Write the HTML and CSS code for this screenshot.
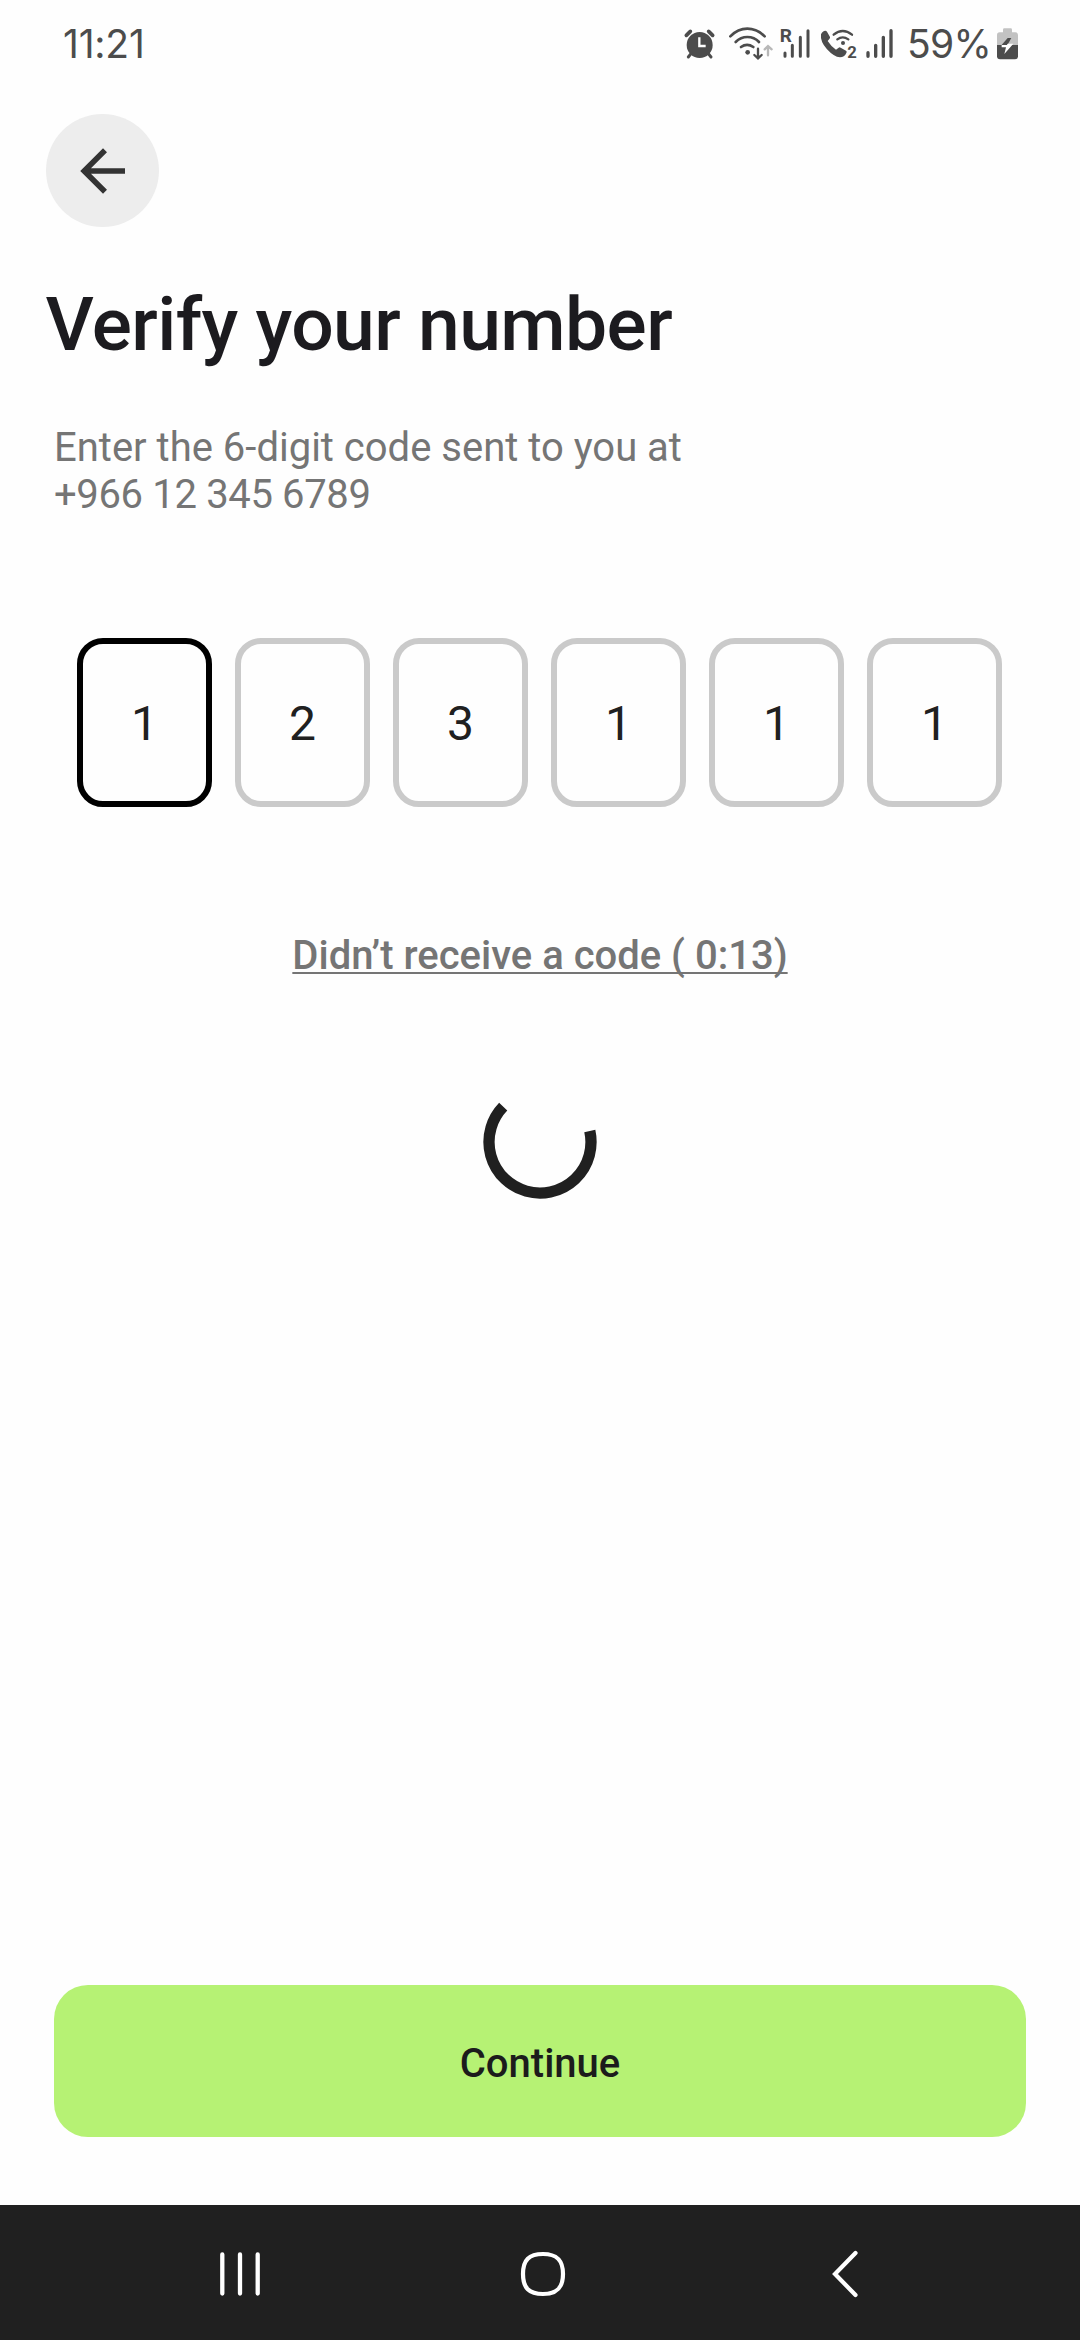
FILE: index.html
```html
<!DOCTYPE html>
<html lang="en">
<head>
<meta charset="utf-8">
<title>Verify your number</title>
<link rel="stylesheet" href="styles.css">
</head>
<body>
<div class="screen">
  <header class="status-bar">
    <span class="clock">11:21</span>
    <div class="indicators">
      <svg class="alarm" viewBox="42 36 93 99" width="31" height="33">
        <circle cx="89" cy="90" r="39" fill="#4c4c4c"/>
        <path d="M49 61L61 49M128 61L116 49" stroke="#4c4c4c" stroke-width="11" stroke-linecap="round"/>
        <path d="M63 116L55 126M115 116L123 126" stroke="#4c4c4c" stroke-width="9" stroke-linecap="round"/>
        <path d="M88 67V93H107" fill="none" stroke="#fff" stroke-width="7"/>
      </svg>
      <svg class="wifi" viewBox="174 36 138 99" width="46" height="33">
        <g fill="none" stroke="#4c4c4c" stroke-width="8" stroke-linecap="round">
          <path d="M181 64Q204 41 232 41Q261 41 284 64"/>
          <path d="M197 81Q212 66 232 66Q253 66 267 81"/>
          <path d="M213 96Q231 83 250 96"/>
          <path d="M264 101V128M253 120L264 130L275 120" stroke-width="7"/>
          <path d="M294 121V95M284 103L294 93L305 103" stroke="#b8b8b8" stroke-width="7"/>
        </g>
        <circle cx="233" cy="112" r="7" fill="#4c4c4c"/>
      </svg>
      <svg class="signal-roaming" viewBox="327 36 96 99" width="32" height="33">
        <text class="icon-text" x="329" y="81" font-size="57">R</text>
        <path d="M345 114V124M367 91V124M391 67V124M414 47V124" stroke="#4c4c4c" stroke-width="9" stroke-linecap="round"/>
      </svg>
      <svg class="wifi-call" viewBox="450 36 114 99" width="38" height="33">
        <path d="M453 58Q458 47 466 47Q469 47 471 50L480 66Q481 69 478 72L473 78Q483 94 498 104L506 98Q509 96 512 98L528 107Q532 110 529 114Q523 127 510 127Q492 126 471 103Q450 80 453 58Z" fill="#4c4c4c"/>
        <g fill="none" stroke="#4c4c4c" stroke-width="7" stroke-linecap="round">
          <path d="M491 59Q518 37 546 59"/>
          <path d="M502 73Q518 61 535 73"/>
        </g>
        <circle cx="519" cy="84" r="6" fill="#4c4c4c"/>
        <text class="icon-text" x="532" y="128" font-size="50">2</text>
      </svg>
      <svg class="signal" viewBox="45 36 87 99" width="29" height="33">
        <path d="M54 113V124M77 91V124M100 67V124M123 47V124" stroke="#4c4c4c" stroke-width="10" stroke-linecap="round"/>
      </svg>
      <span class="percent">59%</span>
      <svg class="battery" viewBox="438 36 69 99" width="23" height="33">
        <path d="M459 44Q459 40 463 40H482Q486 40 486 44V52H496Q504 52 504 60V90H441V60Q441 52 449 52H459Z" fill="#c2c2c2"/>
        <path d="M441 90H504V124Q504 133 495 133H450Q441 133 441 124Z" fill="#4c4c4c"/>
        <path d="M473 69H484L474 87L471 91H454Z" fill="#4c4c4c"/>
        <path d="M473 86H490L463 117L468 97H455V90H471Z" fill="#fff"/>
      </svg>
    </div>
  </header>

  <main class="content">
    <button class="back" aria-label="Back">
      <svg viewBox="0 0 46 46" width="46" height="46" fill="none" stroke="#333" stroke-width="5.6">
        <path d="M45 23H4M25 2.200L4.200 23L25 43.800"/>
      </svg>
    </button>
    <h1 class="title">Verify your number</h1>
    <p class="hint">Enter the 6-digit code sent to you at<br><span class="phone">+966 12 345 6789</span></p>
    <div class="code">
      <span class="cell cell-active">1</span>
      <span class="cell">2</span>
      <span class="cell">3</span>
      <span class="cell">1</span>
      <span class="cell">1</span>
      <span class="cell">1</span>
    </div>
    <a class="resend">Didn’t receive a code ( 0:13)</a>
    <svg class="spinner" viewBox="-57 -57 114 114" width="114" height="114">
      <path d="M49.800 -11A51 51 0 1 1 -36.800 -35.300" fill="none" stroke="#202020" stroke-width="11.300"/>
    </svg>
    <button class="continue">Continue</button>
  </main>

  <nav class="nav-bar">
    <svg viewBox="0 0 50 50" width="50" height="50" stroke="#fff" stroke-width="4.300" stroke-linecap="round">
      <path d="M7.300 5.500V44.500M25 5.500V44.500M42.700 5.500V44.500"/>
    </svg>
    <svg viewBox="0 0 50 50" width="50" height="50" fill="none" stroke="#fff" stroke-width="4.200">
      <path d="M25 5C39 5 45 11 45 25S39 45 25 45S5 39 5 25S11 5 25 5Z"/>
    </svg>
    <svg viewBox="0 0 50 50" width="50" height="50" fill="none" stroke="#fff" stroke-width="4.200" stroke-linecap="round">
      <path d="M35.500 4L15 25L35.500 46"/>
    </svg>
  </nav>
</div>
</body>
</html>
```
FILE: styles.css
```css
* {
  box-sizing: border-box;
}

body {
  margin: 0;
  background: #fefefe;
  font-family: Roboto, "Liberation Sans", sans-serif;
}

button {
  border: 0;
  font-family: inherit;
}

svg {
  display: block;
  flex: none;
  overflow: visible;
}

.screen {
  display: flex;
  flex-direction: column;
  width: 1080px;
  height: 2340px;
}

.status-bar {
  display: flex;
  justify-content: space-between;
  align-items: center;
  height: 87px;
  padding: 0 61px 0 63px;
  color: #4c4c4c;
  font-family: Inter, "Liberation Sans", sans-serif;
  font-size: 39px;
  line-height: 47px;
}

.clock {
  letter-spacing: -0.2px;
}

.indicators {
  display: flex;
  align-items: center;
}

.wifi {
  margin-left: 13px;
}

.signal-roaming {
  margin-left: 5px;
}

.wifi-call {
  margin-left: 9px;
}

.signal {
  margin-left: 7px;
}

.percent {
  width: 87px;
  margin-left: 13px;
  margin-right: 2px;
  letter-spacing: -0.7px;
  white-space: nowrap;
}

.icon-text {
  font-family: Roboto, sans-serif;
  font-weight: 700;
  fill: #4c4c4c;
}

.content {
  display: flex;
  flex: 1;
  flex-direction: column;
  padding: 27px 54px 68px;
}

.back {
  display: flex;
  align-items: center;
  justify-content: center;
  width: 113px;
  height: 113px;
  margin-left: -8px;
  padding: 0;
  border-radius: 50%;
  background: #ededed;
}

.title {
  margin: 53px 0 0 -8.5px;
  color: #1c1b1f;
  font-size: 75px;
  font-weight: 500;
  line-height: 88px;
  letter-spacing: -0.62px;
}

.hint {
  margin: 56px 0 0;
  color: #757575;
  font-size: 40px;
  line-height: 47px;
}

.phone {
  letter-spacing: -0.35px;
}

.code {
  display: flex;
  gap: 23px;
  margin: 120px 0 0 23px;
}

.cell {
  display: flex;
  align-items: center;
  justify-content: center;
  width: 135px;
  height: 169px;
  padding-top: 2px;
  border: 6px solid #cacaca;
  border-radius: 26px;
  color: #202020;
  font-size: 48px;
}

.cell-active {
  border-color: #000;
}

.resend {
  align-self: center;
  margin-top: 125px;
  color: #757575;
  font-size: 40px;
  font-weight: 500;
  line-height: 47px;
  text-decoration: underline;
  text-decoration-skip-ink: none;
  text-decoration-thickness: 2px;
  text-underline-offset: 3px;
}

.spinner {
  align-self: center;
  margin-top: 106px;
}

.continue {
  height: 152px;
  margin-top: auto;
  padding: 4px 0 0;
  border-radius: 34px;
  background: #b6f274;
  color: #1c1c1c;
  font-size: 40px;
  font-weight: 500;
}

.nav-bar {
  display: flex;
  align-items: center;
  justify-content: space-between;
  height: 135px;
  padding: 3px 210px 0 215px;
  background: #202020;
}
```
